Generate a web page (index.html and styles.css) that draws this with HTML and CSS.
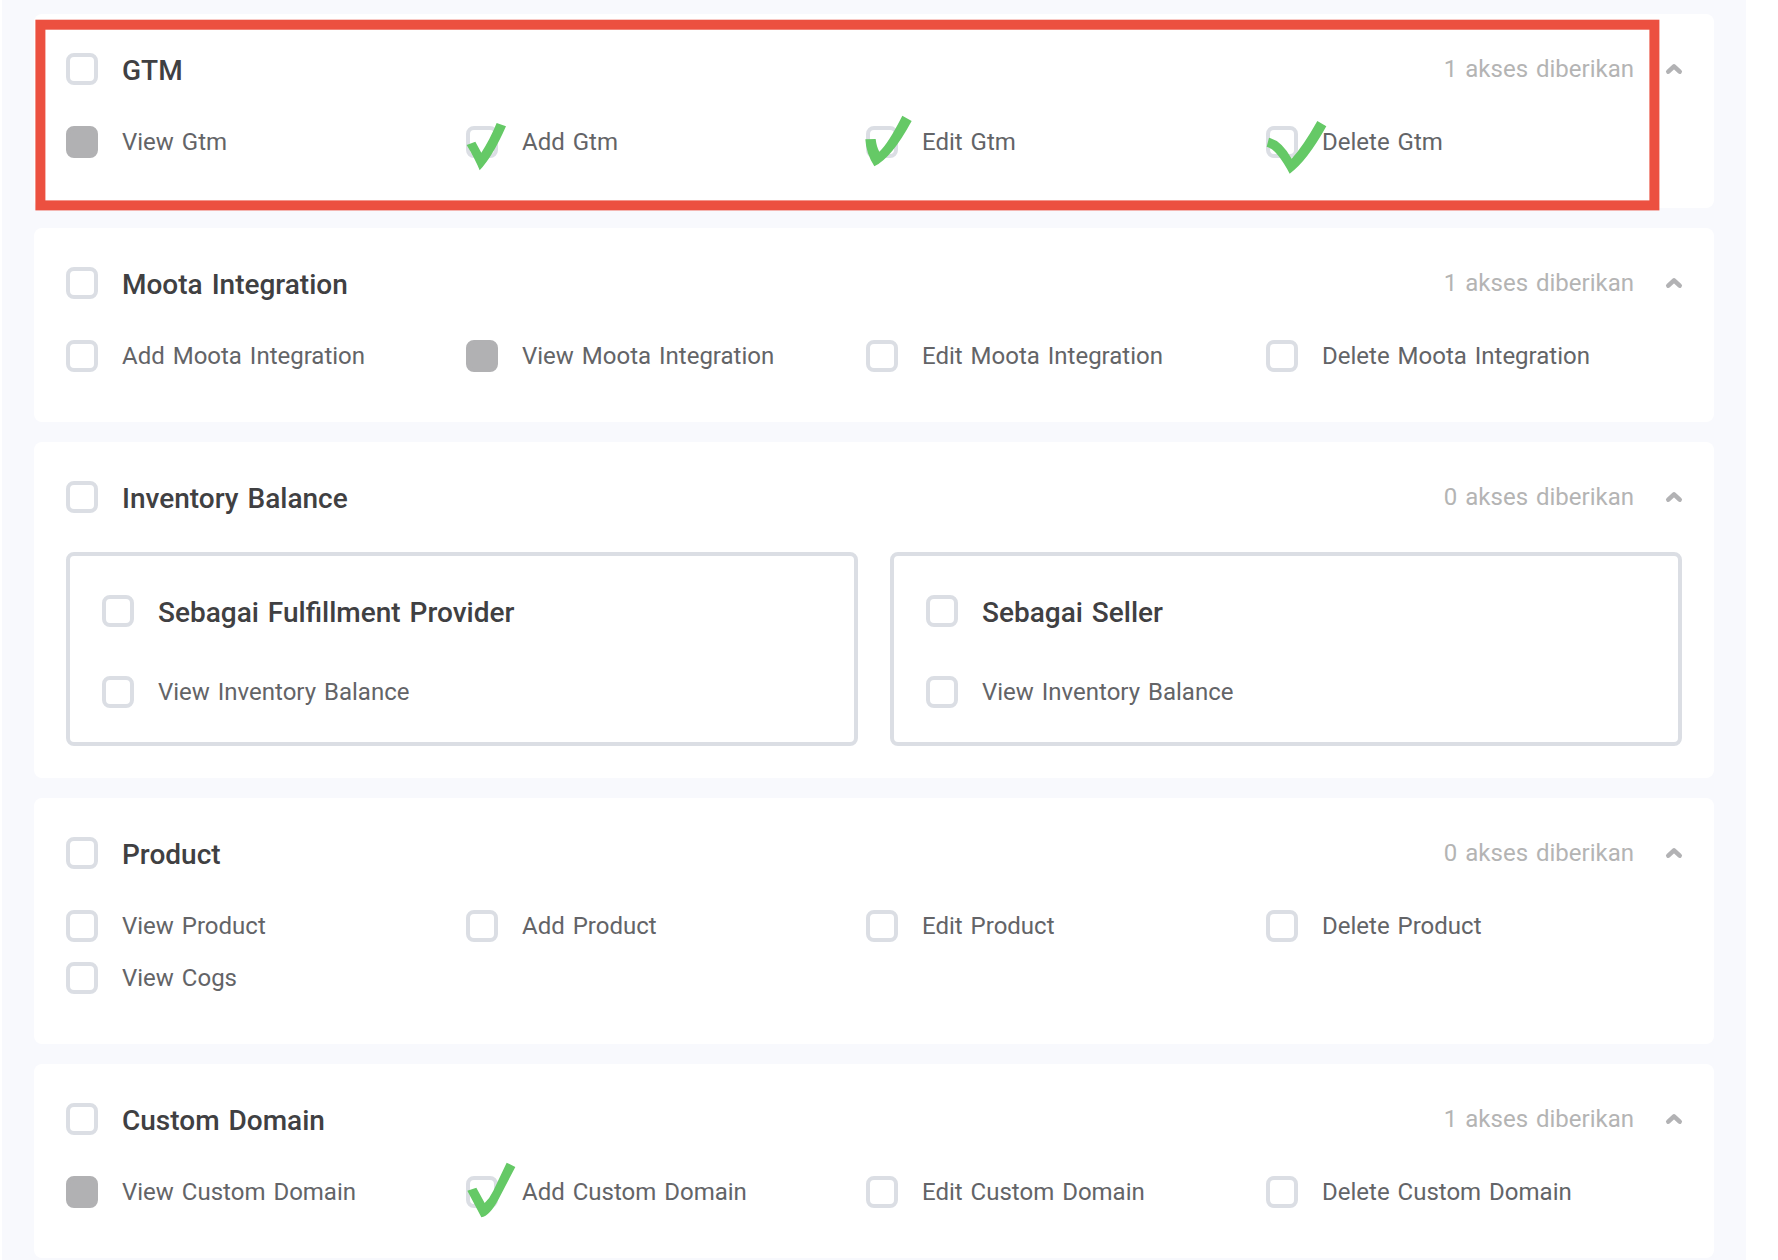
FILE: index.html
```html
<!DOCTYPE html>
<html lang="id">
<head>
<meta charset="utf-8">
<title>Hak Akses</title>
<link rel="stylesheet" href="styles.css">
</head>
<body>
<svg class="defs" width="0" height="0"><symbol id="chevron" viewBox="0 0 16 10" overflow="visible"><path d="M2.3 7.6 8 2.4 13.7 7.6" fill="none" stroke="currentColor" stroke-width="4.6" stroke-linecap="round" stroke-linejoin="round"/></symbol></svg>
<main class="panel">
  <section class="card">
    <header class="head"><span class="box"></span><h2>GTM</h2><span class="count">1 akses diberikan</span><svg class="chev"><use href="#chevron"/></svg></header>
    <div class="grid">
      <div class="item"><span class="box on"></span><span>View Gtm</span></div>
      <div class="item"><span class="box"><svg class="tick" viewBox="78 60 210 180"><path d="M80 165 106 155 124 188Q150 148 170 99L198 109Q158 200 119 241Q106 208 80 165Z"/></svg></span><span>Add Gtm</span></div>
      <div class="item"><span class="box"><svg class="tick" viewBox="78 60 210 180"><path d="M76 148 107 147Q110 172 118 185Q145 160 187 77L215 93Q155 204 103 229Q78 190 76 148Z"/></svg></span><span>Edit Gtm</span></div>
      <div class="item"><span class="box"><svg class="tick" viewBox="78 60 210 180"><path d="M80 170 87 143Q125 152 155 206Q190 168 232 93L259 109Q200 215 149 251Q110 178 80 170Z"/></svg></span><span>Delete Gtm</span></div>
    </div>
  </section>
  <section class="card">
    <header class="head"><span class="box"></span><h2>Moota Integration</h2><span class="count">1 akses diberikan</span><svg class="chev"><use href="#chevron"/></svg></header>
    <div class="grid">
      <div class="item"><span class="box"></span><span>Add Moota Integration</span></div>
      <div class="item"><span class="box on"></span><span>View Moota Integration</span></div>
      <div class="item"><span class="box"></span><span>Edit Moota Integration</span></div>
      <div class="item"><span class="box"></span><span>Delete Moota Integration</span></div>
    </div>
  </section>
  <section class="card split">
    <header class="head"><span class="box"></span><h2>Inventory Balance</h2><span class="count">0 akses diberikan</span><svg class="chev"><use href="#chevron"/></svg></header>
    <div class="roles">
      <div class="role">
        <div class="item"><span class="box"></span><h2>Sebagai Fulfillment Provider</h2></div>
        <div class="item"><span class="box"></span><span>View Inventory Balance</span></div>
      </div>
      <div class="role">
        <div class="item"><span class="box"></span><h2>Sebagai Seller</h2></div>
        <div class="item"><span class="box"></span><span>View Inventory Balance</span></div>
      </div>
    </div>
  </section>
  <section class="card">
    <header class="head"><span class="box"></span><h2>Product</h2><span class="count">0 akses diberikan</span><svg class="chev"><use href="#chevron"/></svg></header>
    <div class="grid">
      <div class="item"><span class="box"></span><span>View Product</span></div>
      <div class="item"><span class="box"></span><span>Add Product</span></div>
      <div class="item"><span class="box"></span><span>Edit Product</span></div>
      <div class="item"><span class="box"></span><span>Delete Product</span></div>
      <div class="item"><span class="box"></span><span>View Cogs</span></div>
    </div>
  </section>
  <section class="card">
    <header class="head"><span class="box"></span><h2>Custom Domain</h2><span class="count">1 akses diberikan</span><svg class="chev"><use href="#chevron"/></svg></header>
    <div class="grid">
      <div class="item"><span class="box on"></span><span>View Custom Domain</span></div>
      <div class="item"><span class="box"><svg class="tick" viewBox="78 90 210 180"><path d="M82 182 109 173 134 219Q149 205 160 182L200 98 226 111 176 207Q149 258 124 262Z"/></svg></span><span>Add Custom Domain</span></div>
      <div class="item"><span class="box"></span><span>Edit Custom Domain</span></div>
      <div class="item"><span class="box"></span><span>Delete Custom Domain</span></div>
    </div>
  </section>
  <svg class="highlight" viewBox="0 0 1626 194"><rect x="6.4" y="6.7" width="1614" height="180.7"/></svg>
</main>
</body>
</html>
```
FILE: styles.css
```css
* { box-sizing: border-box; }
html { background: #fff; }
body {
  margin: 0;
  height: 1260px;
  overflow: hidden;
  font-family: Roboto, "Liberation Sans", sans-serif;
  font-size: 24px;
  line-height: 32px;
  word-spacing: 2px;
  color: #636467;
}
.defs { position: absolute; }
.panel {
  position: relative;
  display: flex;
  flex-direction: column;
  gap: 20px;
  width: 1744px;
  height: 1260px;
  margin-left: 2px;
  padding: 14px 32px 0;
  background: #f8f9fd;
}
.card {
  flex: none;
  padding: 39px 32px 50px;
  background: #fff;
  border-radius: 8px;
}
.card.split { padding-bottom: 32px; }
.head, .item {
  display: flex;
  align-items: center;
  gap: 24px;
  height: 32px;
  white-space: nowrap;
}
h2 {
  margin: 0;
  padding-top: 4px;
  font-size: 28px;
  font-weight: 500;
  color: #404042;
}
.count { margin-left: auto; color: #b4b4b4; }
.chev {
  width: 16px;
  height: 10px;
  margin-left: 8px;
  color: #b2b2b4;
  overflow: visible;
}
.box {
  position: relative;
  flex: none;
  width: 32px;
  height: 32px;
  border: 4px solid #dbdee4;
  border-radius: 8px;
}
.box.on { background: #b1b1b3; border-color: #b1b1b3; }
.grid {
  display: grid;
  grid-template-columns: repeat(4, 400px);
  row-gap: 20px;
  margin-top: 41px;
}
.roles {
  display: grid;
  grid-template-columns: 1fr 1fr;
  gap: 32px;
  margin-top: 39px;
}
.role {
  display: flex;
  flex-direction: column;
  gap: 49px;
  height: 194px;
  padding: 39px 32px;
  border: 4px solid #dbdee4;
  border-radius: 8px;
}
.tick {
  position: absolute;
  left: -4px;
  top: -20px;
  width: 70px;
  height: 60px;
  overflow: visible;
  fill: #65c966;
}
.highlight {
  position: absolute;
  left: 32px;
  top: 18px;
  width: 1626px;
  height: 194px;
  fill: none;
  stroke: #ec5040;
  stroke-width: 10px;
}
```
